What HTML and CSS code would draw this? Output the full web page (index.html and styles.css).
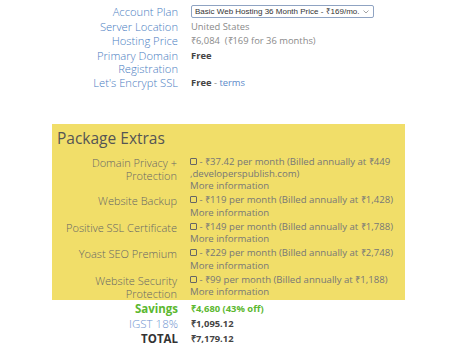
FILE: index.html
```html
<!DOCTYPE html>
<html lang="en">
<head>
  <meta charset="UTF-8">
  <title>Order Summary</title>
  <link rel="stylesheet" href="styles.css">
</head>
<body>
  <div class="order">
    <div class="details">
      <div class="row">
        <div class="label">Account Plan</div>
        <div class="value">
          <div class="plan-select">
            <span>Basic Web Hosting 36 Month Price - ₹169/mo.</span>
            <svg class="caret" width="6" height="4" viewBox="0 0 6 4"><path d="M0.5 0.5 L3 3 L5.5 0.5" fill="none" stroke="#999" stroke-width="0.9"/></svg>
          </div>
        </div>
      </div>
      <div class="row">
        <div class="label">Server Location</div>
        <div class="value">United States</div>
      </div>
      <div class="row">
        <div class="label">Hosting Price</div>
        <div class="value">₹6,084&nbsp; (₹169 for 36 months)</div>
      </div>
      <div class="row">
        <div class="label">Primary Domain Registration</div>
        <div class="value"><b>Free</b></div>
      </div>
      <div class="row">
        <div class="label">Let's Encrypt SSL</div>
        <div class="value"><b>Free</b> - <a href="#">terms</a></div>
      </div>
    </div>

    <div class="extras">
      <h2>Package Extras</h2>
      <div class="row">
        <div class="label">Domain Privacy + Protection</div>
        <div class="value"><span class="box"></span> - ₹37.42 per month (Billed annually at ₹449<br>,developerspublish.com)<br>More information</div>
      </div>
      <div class="row">
        <div class="label">Website Backup</div>
        <div class="value"><span class="box"></span> - ₹119 per month (Billed annually at ₹1,428)<br>More information</div>
      </div>
      <div class="row">
        <div class="label">Positive SSL Certificate</div>
        <div class="value"><span class="box"></span> - ₹149 per month (Billed annually at ₹1,788)<br>More information</div>
      </div>
      <div class="row">
        <div class="label">Yoast SEO Premium</div>
        <div class="value"><span class="box"></span> - ₹229 per month (Billed annually at ₹2,748)<br>More information</div>
      </div>
      <div class="row">
        <div class="label">Website Security Protection</div>
        <div class="value"><span class="box"></span> - ₹99 per month (Billed annually at ₹1,188)<br>More information</div>
      </div>
    </div>

    <div class="totals">
      <div class="row savings">
        <div class="label">Savings</div>
        <div class="value">₹4,680 (43% off)</div>
      </div>
      <div class="row tax">
        <div class="label">IGST 18%</div>
        <div class="value">₹1,095.12</div>
      </div>
      <div class="row total">
        <div class="label">TOTAL</div>
        <div class="value">₹7,179.12</div>
      </div>
    </div>
  </div>
</body>
</html>
```

FILE: styles.css
```css
body {
  font-family: 'Open Sans', sans-serif;
  background-color: #fff;
  margin: 0;
  padding: 0;
}

.order {
  padding-top: 5px;
}

.row {
  display: grid;
  grid-template-columns: 178px 1fr;
  column-gap: 13px;
  padding-bottom: 1.5px;
}

.details .row {
  grid-template-columns: 98px 1fr;
  margin-left: 80px;
}

.label {
  text-align: right;
  font-size: 11.2px;
  font-weight: 300;
  line-height: 13px;
  color: #4a7ec2;
}

.value {
  font-size: 9.4px;
  line-height: 13px;
  color: #8a8a8a;
}

.value b {
  color: #444;
  font-weight: 700;
}

.value a {
  color: #5b8ac9;
  text-decoration: none;
}

.plan-select {
  display: flex;
  align-items: center;
  justify-content: space-between;
  box-sizing: border-box;
  height: 13px;
  width: 183px;
  padding: 0 4px 0 3px;
  border: 1px solid #8fa3c2;
  border-radius: 2px;
  font-family: 'Liberation Sans', Arial, sans-serif;
  font-size: 8px;
  color: #333;
  white-space: nowrap;
}

.extras {
  margin: 33px 0 0 52px;
  width: 353px;
  background-color: #f1de69;
  padding: 4px 0 0;
}

.extras .row {
  grid-template-columns: 125px 1fr;
  padding-bottom: 1.6px;
}

.extras .row:last-child {
  padding-bottom: 0;
}

.extras h2 {
  margin: 0 0 8px 5px;
  font-size: 15.5px;
  font-weight: 400;
  line-height: 20px;
  color: #555;
}

.extras .label {
  color: #666;
  font-size: 11px;
  line-height: 13px;
}

.extras .value {
  color: #777;
  font-size: 9.6px;
  line-height: 12.4px;
}

.box {
  display: inline-block;
  width: 5px;
  height: 5px;
  border: 1px solid #666;
  border-radius: 1px;
  vertical-align: 0;
}

.totals {
  padding-top: 2px;
}

.totals .row {
  padding-bottom: 1px;
}

.totals .label {
  font-size: 11.5px;
  line-height: 14px;
}

.totals .value {
  font-weight: 700;
  color: #444;
  line-height: 14px;
}

.savings .label,
.savings .value {
  color: #5cb82f;
  font-weight: 700;
}

.tax .label {
  color: #6d93cf;
}

.total .label {
  color: #333;
  font-weight: 700;
}
```
